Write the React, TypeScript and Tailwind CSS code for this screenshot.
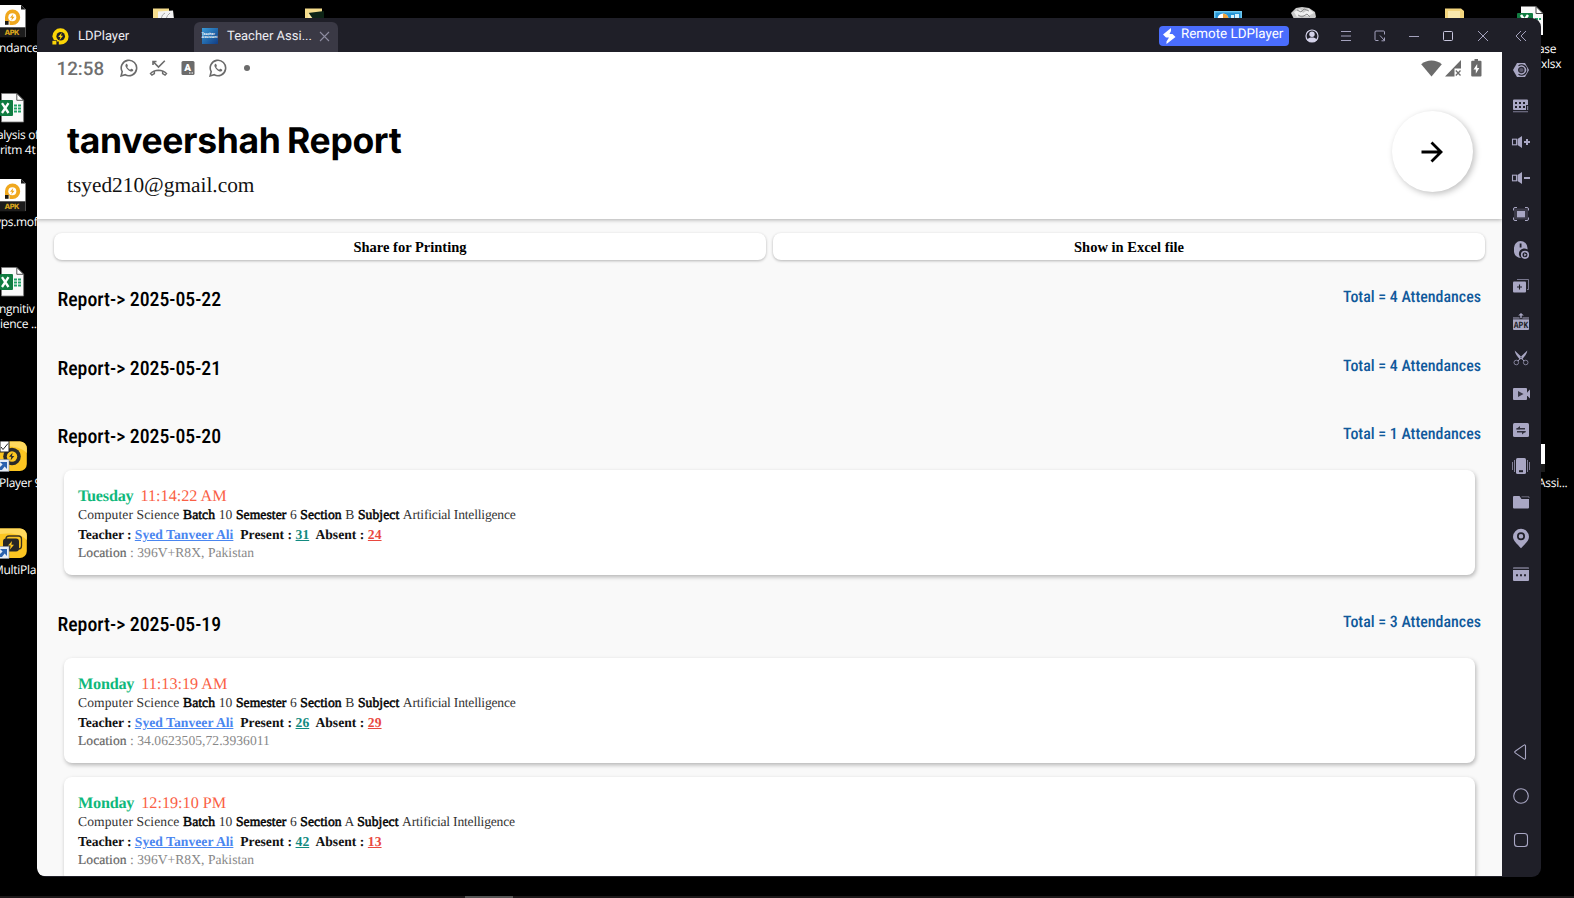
import React from "react";

const LILAC = "#a9a7c4";

function ApkFile() {
  return (
    <svg width="30" height="33" viewBox="0 0 30 33">
      <path d="M0 0H21L25.5 4.5V32H0Z" fill="#fff" />
      <path d="M21 0V4.5H25.5Z" fill="#1c1c1c" />
      <path d="M12.5 4.5a7.7 7.7 0 1 1 0 15.4H9.5V16.5H5V12.2a7.6 7.6 0 0 1 7.5-7.7Z" fill="#f0a81e" />
      <circle cx="12.3" cy="12.2" r="4" fill="#fff" />
      <path d="M13.2 9l-3.2 3.8h2l-.8 3 3.4-4h-2z" fill="#f0a81e" />
      <rect x="5" y="16" width="3.6" height="3.8" fill="#1f1b14" />
      <rect y="22.3" width="25.5" height="10" fill="#1c1c1c" />
      <text x="4.5" y="30.3" fontFamily="Inter, sans-serif" fontWeight="800" fontSize="7.4" textLength="15" fill="#d9a51c">APK</text>
    </svg>
  );
}

function ExcelFile() {
  return (
    <svg width="26" height="30" viewBox="0 0 26 30">
      <path d="M1.5.5H16.8L23.6 7.3V29H1.5Z" fill="#fafafa" stroke="#777" strokeWidth=".8" />
      <path d="M16.8.5V7.3H23.6Z" fill="#fff" stroke="#444" strokeWidth=".9" />
      <path d="M14 11.5h3v2h-3zM18 11.5h3v2h-3zM14 14.5h3v2h-3zM18 14.5h3v2h-3zM14 17.5h3v2h-3zM18 17.5h3v2h-3z" fill="#21a366" />
      <rect x="0" y="7" width="13" height="16" rx="1" fill="#107c41" />
      <path d="M2 10.2L8.5 20M8.5 10.2L2 20" stroke="#fff" strokeWidth="2.3" />
    </svg>
  );
}

function LdShortcut({ multi }: { multi?: boolean }) {
  return (
    <svg width="28" height="31" viewBox="0 0 28 31">
      <rect x="-10" y="0.5" width="36.8" height="29.5" rx="7" fill="#fcc521" />
      <path d="M0 .5h20a7 7 0 0 1 6.8 7V12C20 5 8 5 0 6Z" fill="#ffd95e" />
      {multi ? (
        <>
          <rect x="6" y="8" width="15.5" height="13" rx="3" fill="none" stroke="#3a3020" strokeWidth="1.3" />
          <rect x="3" y="10.5" width="16" height="13" rx="3" fill="#262626" />
          <path d="M12 13l-4 4.5h2.6L10 21.5l4-4.8h-2.6z" fill="#fcc521" />
        </>
      ) : (
        <>
          <circle cx="12" cy="15.5" r="8.8" fill="#292929" />
          <circle cx="12" cy="15.5" r="5.2" fill="#fcc521" />
          <path d="M12.6 11.4l-3.6 4.4h2.3l-.7 3.6 3.7-4.4H12z" fill="#292929" />
          <path d="M0 0H9V11H0Z" fill="#fff" stroke="#222" />
          <path d="M1 6l2 2.5L8 2.5" fill="none" stroke="#222" />
        </>
      )}
      <rect x="-1" y="18.5" width="10" height="12" fill="#e8eef6" stroke="#8a9099" strokeWidth=".6" />
      <path d="M0 21h7v7l-2.4-2.4L2 29H0v-3l2.6-2.6z" fill="#2b62ae" />
    </svg>
  );
}

function LdLogo() {
  return (
    <svg width="17" height="17" viewBox="0 0 17 17">
      <path d="M8.5.3a8.1 8.1 0 0 1 0 16.2H6.8V13.6H4.2A8 8 0 0 1 .3 8.4 8.1 8.1 0 0 1 8.500.3Z" fill="#fbd506" />
      <circle cx="8.7" cy="8.3" r="4.3" fill="#1f1f28" />
      <path d="M9.8 4.6L6.2 8.9h2.1l-.8 3.3 3.6-4.4H9z" fill="#fbd506" />
      <path d="M0 12.200H5V17H0z" fill="#1f1f28" />
      <rect x=".4" y="12.800" width="4" height="3.700" fill="#fbd506" />
    </svg>
  );
}

function WhatsApp() {
  return (
    <svg width="18" height="18" viewBox="0 0 18 18" fill="none" stroke="#6b6b6b">
      <path d="M1.1 16.9l1.1-4.2a7.7 7.7 0 1 1 3 3z" strokeWidth="1.6" />
      <path d="M6.2 4.9c-.9.6-1 1.7-.5 2.8 1 2.2 2.600 3.800 4.900 4.700 1.100.4 2.200 0 2.600-.9.1-.4.1-.7-.2-.9l-1.500-.8c-.3-.1-.5 0-.7.2l-.6.8C8.800 10.200 7.700 9.200 7.200 8l.6-.8c.1-.2.1-.4 0-.6L7.100 5.100c-.2-.4-.6-.4-.9-.2z" fill="#6b6b6b" stroke="none" />
    </svg>
  );
}

function MissedCall() {
  return (
    <svg width="19" height="17" viewBox="0 0 19 17" fill="none" stroke="#6b6b6b">
      <path d="M4 5V1.500H7.500M4.300 1.800L9.500 7 15.800.7" strokeWidth="1.600" />
      <path d="M.5 13.500C5.300 8.200 13.700 8.200 18.500 13.500L16.200 16 12.900 13.900V11.600C10.700 11 8.300 11 6.100 11.600V13.900L2.800 16Z" fill="#6b6b6b" stroke="none" />
      <path d="M2.400 13.500L4.600 12.100V13.200L2.900 14.200ZM16.600 13.500L14.400 12.100V13.200L16.100 14.200Z" fill="#fff" stroke="none" />
    </svg>
  );
}

const toolIcons: React.ReactNode[] = [
  <g key="a">
    <path d="M5 2H13L17 9 13 16H5L1 9Z" />
    <path d="M6.500 4.800A5.200 5.200 0 1 1 6.500 13.200" fill="none" stroke="#1f1f28" strokeWidth="1.200" />
    <circle cx="9.300" cy="9" r="2.700" fill="#5b596c" stroke="#2a2935" strokeWidth="1.200" />
  </g>,
  <g key="b">
    <path fillRule="evenodd" d="M2 2.500H15a1 1 0 0 1 1 1V8H14V13H2a1 1 0 0 1-1-1V3.500a1 1 0 0 1 1-1ZM3 5V7H5V5ZM7 5V7H9V5ZM11 5V7H13V5ZM3 9V11H5V9ZM7 9V11H9V9ZM11 9V11H13V9Z" />
    <path d="M15 9h1.200v4H15zM1 14.300H16v.9H1z" opacity=".7" />
  </g>,
  <g key="c">
    <path d="M10 3V15L5.500 12V6Z" />
    <rect x=".5" y="6.200" width="4" height="5.600" fill="none" stroke={LILAC} strokeWidth="1.100" />
    <path d="M12 8.100h6v1.900h-6zM14 6h2v6h-2z" />
  </g>,
  <g key="d">
    <path d="M10 3V15L5.500 12V6Z" />
    <rect x=".5" y="6.200" width="4" height="5.600" fill="none" stroke={LILAC} strokeWidth="1.100" />
    <path d="M12 8.100h6v1.800h-6z" />
  </g>,
  <g key="e">
    <rect x="2" y="3.500" width="14" height="11" fill="#3c3b49" />
    <rect x="5" y="6" width="8" height="6.300" />
    <path d="M1.500 5.500V4a1.500 1.500 0 0 1 1.500-1.500H5M13 2.500h2A1.500 1.500 0 0 1 16.500 4V5.500M16.500 12.500V14a1.500 1.500 0 0 1-1.500 1.500H13M5 15.500H3A1.500 1.500 0 0 1 1.500 14V12.500" fill="none" stroke={LILAC} />
  </g>,
  <g key="f">
    <path d="M8.500 0A7 7 0 0 1 15.500 7V8.500A5 5 0 0 0 9 17 6.800 6.800 0 0 1 2 11V7A6.800 6.800 0 0 1 8.500 0Z" />
    <rect x="7.700" y="2.500" width="1.800" height="4" fill="#1f1f28" />
    <circle cx="13" cy="13.800" r="3.300" fill="none" stroke={LILAC} strokeWidth="1.600" />
    <path d="M12.200 12.200l2.500 1.600-2.500 1.600z" />
  </g>,
  <g key="g">
    <path d="M5 2.500H16.500V12.500H15" fill="none" stroke={LILAC} opacity=".65" />
    <rect x="1" y="4.500" width="13" height="11" rx="1" />
    <path d="M7.500 7.500v5M5 10h5" stroke="#1f1f28" strokeWidth="1.100" />
  </g>,
  <g key="h">
    <path d="M8.300 5V2.500H6.200L9 0l2.800 2.500H9.700V5z" />
    <path d="M1 4.500H7.500V5.700H10.500V4.500H17V16a1 1 0 0 1-1 1H2a1 1 0 0 1-1-1Z" />
    <path d="M1 5.900H17" stroke="#1f1f28" strokeWidth=".9" />
    <text x="1.800" y="15" fontSize="9.500" textLength="14.400" lengthAdjust="spacingAndGlyphs" fontWeight="700" fontFamily="Liberation Mono, monospace" fill="#1f1f28">APK</text>
  </g>,
  <g key="i">
    <path d="M2.700 1.500C3 4.500 5.200 7.500 8 10.500L10 8.500ZM15.300 1.500C15 4.500 12.800 7.500 10 10.500L8 8.500Z" />
    <path d="M9 8.500L6 12M9 8.500L12 12" stroke={LILAC} />
    <circle cx="4.300" cy="13.500" r="2.300" fill="none" stroke={LILAC} opacity=".7" />
    <circle cx="13.700" cy="13.500" r="2.300" fill="none" stroke={LILAC} opacity=".7" />
  </g>,
  <g key="j">
    <rect x="1" y="3" width="14" height="12" rx="1" />
    <path d="M15 7.500L18 4.500V13.500L15 10.500Z" />
    <path d="M6 6l5.500 3L6 12z" fill="#3a3947" />
  </g>,
  <g key="k">
    <rect x="1" y="2" width="16" height="14" rx="1.500" />
    <path d="M4.500 7.800H13M13.500 10.800H5" stroke="#33323f" strokeWidth="1.500" />
    <path d="M4 8.300L8 5V8.300ZM14 10.300L10 13.600V10.300Z" fill="#33323f" />
  </g>,
  <g key="l">
    <rect x="4" y="1" width="10" height="16" rx="1.500" />
    <path d="M7 13.200h4v2H7z" fill="#1f1f28" />
    <path d="M2.500 3V15M15.500 3V15" stroke={LILAC} opacity=".7" />
    <path d="M.5 5V13M17.500 5V13" stroke={LILAC} opacity=".7" />
  </g>,
  <g key="m">
    <path d="M1 4a1 1 0 0 1 1-1H7.500L9.500 6H17V14.500a1 1 0 0 1-1 1H2a1 1 0 0 1-1-1Z" />
    <path d="M9.500 3.800H17V5" fill="none" stroke={LILAC} opacity=".55" />
  </g>,
  <path key="n" transform="translate(0 .8)" fillRule="evenodd" d="M9-1A8 8 0 0 1 17 7C17 11 13 14 9 18.500 5 14 1 11 1 7A8 8 0 0 1 9-1ZM9 2.500A4 4 0 1 0 9 10.500 4 4 0 1 0 9 2.500ZM9 4.200A2.300 2.300 0 1 1 9 8.800 2.300 2.300 0 1 1 9 4.200Z" />,
  <g key="o">
    <path d="M2 2H16a1 1 0 0 1 1 1v1H1V3a1 1 0 0 1 1-1Z" opacity=".5" />
    <path d="M1 5H17V15a1 1 0 0 1-1 1H2a1 1 0 0 1-1-1Z" />
    <path d="M4 9.200h2v2H4zM8 9.200h2v2H8zM12 9.200h2v2h-2z" fill="#2a2935" />
  </g>,
];

const navIcons: React.ReactNode[] = [
  <path key="back" d="M13.500 2.800V15.200a1 1 0 0 1-1.600.7L3.200 9.900a1 1 0 0 1 0-1.700L11.900 2.100a1 1 0 0 1 1.600.7Z" />,
  <circle key="home" cx="9" cy="9" r="7.300" />,
  <rect key="recent" x="2.500" y="2.500" width="13" height="13" rx="3" />,
];

type Entry = { day: string; time: string; section: string; present: number; absent: number; location: string };

function Strong({ children }: { children: string }) {
  return <span className="text-black [-webkit-text-stroke:0.500px_#000]">{children}</span>;
}

function EntryCard({ e }: { e: Entry }) {
  return (
    <div className="h-[105px] shrink-0 whitespace-pre rounded-[8px] bg-white pl-[14px] pt-[16px] font-['Liberation_Serif',serif] text-[13.600px] text-[#333] shadow-[1px_2px_4px_rgba(0,0,0,0.28)]">
      <div className="h-[19px] text-[16.200px] leading-[20px]">
        <b className="tracking-[-0.220px] text-[#0fb87b]">{e.day}</b>
        <span className="ml-[7px] text-[#fa6045]">{e.time}</span>
      </div>
      <div className="h-[20px] leading-[20px] tracking-[0.090px]">
        Computer Science <Strong>Batch</Strong> 10 <Strong>Semester</Strong> 6 <Strong>Section</Strong> {e.section} <Strong>Subject</Strong> <span className="tracking-[-0.200px]">Artificial Intelligence</span>
      </div>
      <div className="h-[19px] font-bold leading-[19px] tracking-[0.040px] text-[#111]">
        <span className="tracking-[-0.060px]">Teacher : </span><span className="text-[#4a86f0] underline">Syed Tanveer Ali</span>
        {"  "}Present : <span className="text-[#128a80] underline">{e.present}</span>
        {"  "}Absent : <span className="text-[#e9483f] underline">{e.absent}</span>
      </div>
      <div className="h-[18px] leading-[18px] tracking-[0.030px] text-[#888]">
        <span className="text-[#666] [-webkit-text-stroke:0.200px_#666]">Location</span> : {e.location}
      </div>
    </div>
  );
}

function DayHeading({ date, total }: { date: string; total: number }) {
  return (
    <div className="flex h-[24px] justify-between whitespace-pre pl-[20.500px] pr-[21px] font-[Roboto,sans-serif] font-medium [font-stretch:75%]">
      <div className="text-[19.800px] leading-[24px] text-black">{`Report-> ${date}`}</div>
      <div className="-mt-[3px] text-[15.950px] leading-[24px] text-[#115a9c]">{`Total = ${total} Attendances`}</div>
    </div>
  );
}

const entries: Entry[] = [
  { day: "Tuesday", time: "11:14:22 AM", section: "B", present: 31, absent: 24, location: "396V+R8X, Pakistan" },
  { day: "Monday", time: "11:13:19 AM", section: "B", present: 26, absent: 29, location: "34.0623505,72.3936011" },
  { day: "Monday", time: "12:19:10 PM", section: "A", present: 42, absent: 13, location: "396V+R8X, Pakistan" },
];

function Desktop() {
  const label = "absolute whitespace-pre font-['Open_Sans','Noto_Sans',sans-serif] text-[12px] leading-[15px] tracking-[-0.300px] text-white";
  return (
    <div className="absolute inset-0 overflow-hidden bg-black">
      <div className="absolute left-0 top-[5px]"><ApkFile /></div>
      <div className={`${label} -left-[1px] top-[40px]`}>ndance</div>
      <div className="absolute left-0 top-[93px]"><ExcelFile /></div>
      <div className={`${label} -left-[3px] top-[127px]`}>alysis of</div>
      <div className={`${label} -left-[7px] top-[142px]`}>oritm 4t</div>
      <div className="absolute left-0 top-[179px]"><ApkFile /></div>
      <div className={`${label} -left-[5px] top-[214px]`}>yps.mof</div>
      <div className="absolute left-0 top-[267px]"><ExcelFile /></div>
      <div className={`${label} -left-[1px] top-[301px]`}>ngnitiv</div>
      <div className={`${label} left-0 top-[316px]`}>ience ..</div>
      <div className="absolute left-0 top-[441px]"><LdShortcut /></div>
      <div className={`${label} -left-[1px] top-[475px]`}>Player 9</div>
      <div className="absolute left-0 top-[528px]"><LdShortcut multi /></div>
      <div className={`${label} -left-[7px] top-[562px]`}>MultiPla</div>
      <svg className="absolute left-[153px] top-[7px]" width="22" height="12" viewBox="0 0 22 12">
        <path d="M0 1.500H16V12H0Z" fill="#f5dc8c" /><path d="M5 4.500L20 3.500 21 12H5Z" fill="#f2f2f2" /><path d="M8 12q1-5 4-6M13 12q1-4 4-6" stroke="#aaa" fill="none" />
      </svg>
      <svg className="absolute left-[305px] top-[7px]" width="22" height="12" viewBox="0 0 22 12">
        <path d="M0 1.500H17V12H0Z" fill="#f5dc8c" /><path d="M3 6L19 4V12H5Z" fill="#0d2416" /><path d="M3 5l5 7H3z" fill="#fbe9a6" />
      </svg>
      <svg className="absolute left-[1214px] top-[11px]" width="28" height="8" viewBox="0 0 28 8">
        <rect width="28" height="8" fill="#6cc7f0" /><rect x="1.500" y="1.500" width="25" height="7" fill="#2595d6" /><circle cx="9" cy="8" r="5.500" fill="#fff" /><path d="M9 2.500V8h5.500A5.500 5.500 0 0 0 9 2.500" fill="#f0a23a" /><path d="M17 4h3v4h-3zM21 3h4v5h-4z" fill="#d6f0fc" />
      </svg>
      <svg className="absolute left-[1290px] top-[6px]" width="28" height="13" viewBox="0 0 28 13">
        <path d="M1 7L6 2l6-1 7 1 6 4 1 5-2 2H4z" fill="#c9c9c9" /><path d="M4 6l6-3 3 4 6-4 5 4-6 3-6-1-5 2z" fill="#efefef" /><path d="M8 9l4 2 5-3 3 3M7 4l4 2 3-3 5 2" stroke="#8c8c8c" fill="none" />
      </svg>
      <svg className="absolute left-[1445px] top-[7px]" width="20" height="12" viewBox="0 0 20 12">
        <path d="M0 1.500H16L19 4V12H0Z" fill="#f3d57e" /><path d="M3 4H15V12H3Z" fill="#fae9ae" />
      </svg>
      <div className="absolute left-[1517px] top-[6px]">
        <svg width="28" height="30" viewBox="0 0 28 30">
          <path d="M4 .5H19L26 7.500V29H4Z" fill="#fafafa" /><path d="M19 .5V7.500H26Z" fill="#fff" stroke="#444" /><rect y="7" width="16" height="16" rx="1" fill="#107c41" /><path d="M4 9l7 10M11 9L4 19" stroke="#fff" strokeWidth="2.500" /><path d="M18 12h3v2h-3zM22 12h2v2h-2z" fill="#21a366" />
        </svg>
      </div>
      <div className={`${label} left-[1538px] top-[41px]`}>ase</div>
      <div className={`${label} left-[1541px] top-[56px]`}>xlsx</div>
      <div className="absolute left-[1540px] top-[444px] h-[20px] w-[5px] bg-white" />
      <div className="absolute left-[1540px] top-[464px] h-[8px] w-[5px] bg-[#1c1c1c]" />
      <div className={`${label} left-[1538px] top-[475px]`}>Assi...</div>
      <div className="absolute bottom-0 left-0 h-[2px] w-full bg-[#1d191a]" />
      <div className="absolute bottom-0 left-[465px] h-[2px] w-[48px] bg-[#555]" />
    </div>
  );
}

function TitleBar() {
  return (
    <div className="flex h-[34px] shrink-0 items-center font-[Roboto,sans-serif] text-[#ececf2]">
      <div className="ml-[15px] flex w-[141.500px] items-center pt-[2px] text-[13px]">
        <LdLogo />
        <span className="ml-[9px] pt-[2px]">LDPlayer</span>
      </div>
      <div className="flex h-[30px] w-[144px] items-center self-end rounded-t-[6px] bg-[#3a3945] pb-[2px] pl-[8px] text-[13px]">
        <div className="flex h-4 w-4 items-center justify-center bg-linear-to-br from-[#3a9bd8] to-[#133d85] font-['Liberation_Sans',sans-serif] text-[3.500px] font-bold leading-[3.500px] text-white">Teacher<br />Assistant</div>
        <span className="ml-[9.500px] w-[88px] whitespace-pre pt-[2px]">Teacher Assi...</span>
        <svg className="ml-[4px]" width="11" height="11" viewBox="0 0 11 11"><path d="M1 1l9 9M10 1l-9 9" stroke="#8d8ca0" strokeWidth="1.100" /></svg>
      </div>
      <div className="ml-auto flex items-center pt-px">
        <div className="flex h-5 w-[130px] items-center rounded-[4px] bg-[#4a6dfd] pl-[4px] text-[13.400px] text-white">
          <svg width="13" height="16" viewBox="0 0 13 16"><path d="M8 0L0 6.500 3 9.500H6L3.500 13.500V16L12.500 9 9.500 6H6.500L8 3Z" fill="#fff" /></svg>
          <span className="ml-[5px] whitespace-pre">Remote LDPlayer</span>
        </div>
        <svg className="ml-[16px]" width="14" height="14" viewBox="0 0 14 14"><circle cx="7" cy="7" r="6" fill="none" stroke="#d4d2ea" strokeWidth="1.200" /><circle cx="7" cy="5.300" r="2.700" fill="#d4d2ea" /><path d="M2.200 11.200C3 8.900 5 8.600 7 8.600s4 .3 4.800 2.600A6 6 0 0 1 7 13a6 6 0 0 1-4.800-1.800Z" fill="#d4d2ea" /></svg>
        <svg className="ml-[21px]" width="12" height="12" viewBox="0 0 12 12"><path d="M1 1.500H11M1 6H11M1 10.500H11" stroke="#a4a2bd" strokeWidth="1" /></svg>
        <svg className="ml-[22px]" width="12" height="12" viewBox="0 0 12 12"><path d="M4.500 10.500H2A1 1 0 0 1 1 9.500V2A1 1 0 0 1 2 1H9.500A1 1 0 0 1 10.500 2V4.500M6 5.500L10.500 10.500M10.500 7.500V10.800H7.500" fill="none" stroke="#a4a2bd" strokeWidth="1" /></svg>
        <svg className="ml-[22px]" width="12" height="12" viewBox="0 0 12 12"><path d="M1 6.500H11" stroke="#a4a2bd" /></svg>
        <svg className="ml-[22px]" width="12" height="12" viewBox="0 0 12 12"><rect x="1.500" y="1.500" width="9" height="9" rx="1" fill="none" stroke="#c8c6de" /></svg>
        <svg className="mr-[13px] ml-[23px]" width="12" height="12" viewBox="0 0 12 12"><path d="M1 1l10 10M11 1L1 11" stroke="#a4a2bd" /></svg>
      </div>
    </div>
  );
}

function StatusBar() {
  return (
    <div className="flex h-[32px] items-center pl-[19.500px] font-[Roboto,sans-serif]">
      <span className="w-[50px] pt-[3px] text-[18.800px] font-medium leading-none text-[#6f6f6f]">12:58</span>
      <span className="ml-[13px]"><WhatsApp /></span>
      <span className="ml-[11px]"><MissedCall /></span>
      <svg className="ml-[13px]" width="14" height="16" viewBox="0 0 14 16"><rect x=".5" y="1" width="13" height="14" rx="1.500" fill="#6b6b6b" /><text x="3.300" y="11.300" fontFamily="Roboto, sans-serif" fontWeight="900" fontSize="10" fill="#fff">A</text><path d="M8 12.500h1.500v1H8zM10.500 12.500h1.500v1h-1.500z" fill="#fff" /></svg>
      <span className="ml-[14px]"><WhatsApp /></span>
      <span className="ml-[17px] h-[6px] w-[6px] rounded-full bg-[#6b6b6b]" />
      <svg className="ml-auto" width="21" height="17" viewBox="0 0 21 17"><path d="M.2 4.200C6-.7 15-.7 20.800 4.200L10.500 16.500Z" fill="#6b6b6b" /></svg>
      <svg className="ml-[3px]" width="17" height="17" viewBox="0 0 17 17"><path d="M16 0V8.500H9.500V16.500H0Z" fill="#6b6b6b" /><path d="M10.800 10.500l4.700 5M15.500 10.500l-4.700 5" stroke="#6b6b6b" strokeWidth="1.300" /></svg>
      <svg className="mr-[20px] ml-[9px]" width="11" height="18" viewBox="0 0 11 18"><path d="M3.500 0h3.500v1.800h2.500a1 1 0 0 1 1 1V16.500a1 1 0 0 1-1 1H1.200a1 1 0 0 1-1-1V2.800a1 1 0 0 1 1-1h2.300z" fill="#6b6b6b" /><path d="M6.200 5L2.500 10.500h2.300v4.300L8.300 9H6.200z" fill="#fff" /></svg>
    </div>
  );
}

export default function App() {
  const action = "flex h-[27px] flex-1 items-center justify-center rounded-[8px] bg-white pt-[2px] shadow-[0_1px_3px_rgba(0,0,0,0.28)]";
  return (
    <div className="relative h-[898px] w-[1574px] overflow-hidden [text-rendering:geometricPrecision]">
      <Desktop />
      <div className="absolute left-[37px] top-[18px] flex h-[859px] w-[1504px] overflow-hidden rounded-[9px] bg-[#1f1f28] pb-px">
        <div className="flex w-[1465px] flex-col">
          <TitleBar />
          <div className="flex min-h-0 flex-1 flex-col overflow-hidden rounded-bl-[7px] bg-[#f9f9f9]">
            <div className="relative h-[167px] shrink-0 bg-white shadow-[0_1px_4px_rgba(0,0,0,0.3)]">
              <StatusBar />
              <div className="flex justify-between pl-[30px] pr-[29.500px]">
                <div className="whitespace-pre">
                  <h1 className="mt-[35px] font-[Inter,sans-serif] text-[35.500px] font-bold leading-[44px] tracking-[-0.350px] text-black [word-spacing:-1.500px]">tanveershah Report</h1>
                  <p className="mt-[9px] font-['Liberation_Serif',serif] text-[21.350px] leading-[26px] text-[#111]">tsyed210@gmail.com</p>
                </div>
                <button className="mt-[27px] flex h-[81px] w-[81px] items-center justify-center rounded-full bg-white shadow-[2px_2px_6px_rgba(0,0,0,0.25)]">
                  <svg width="22" height="22" viewBox="0 0 22 22" fill="none" stroke="#000" strokeWidth="2.800"><path d="M.5 11H19.500M10.500 1.500L20 11 10.500 20.500" /></svg>
                </button>
              </div>
            </div>
            <div className="mt-[14px] flex shrink-0 gap-[7px] px-[17px] font-['Liberation_Serif',serif] text-[14.500px] font-bold text-black">
              <button className={action}>Share for Printing</button>
              <button className={action}>Show in Excel file</button>
            </div>
            <div className="mt-[28px] shrink-0"><DayHeading date="2025-05-22" total={4} /></div>
            <div className="mt-[45px] shrink-0"><DayHeading date="2025-05-21" total={4} /></div>
            <div className="mt-[44px] shrink-0"><DayHeading date="2025-05-20" total={1} /></div>
            <div className="mt-[21px] shrink-0 pl-[27px] pr-[27px]"><EntryCard e={entries[0]} /></div>
            <div className="mt-[38px] shrink-0"><DayHeading date="2025-05-19" total={3} /></div>
            <div className="mt-[21px] flex shrink-0 flex-col gap-[14px] pl-[27px] pr-[27px]">
              <EntryCard e={entries[1]} />
              <EntryCard e={entries[2]} />
            </div>
          </div>
        </div>
        <div className="flex w-[39px] flex-col items-center pr-[1px]">
          <div className="flex h-[34px] items-center pt-px"><svg width="12" height="12" viewBox="0 0 12 12" fill="none" stroke="#a4a2bd"><path d="M6 1L1 6l5 5M11 1L6 6l5 5" /></svg></div>
          {toolIcons.map((icon, i) => (
            <div key={i} className="flex h-[36px] items-center"><svg width="18" height="18" viewBox="0 0 18 18" fill={LILAC} className="overflow-visible">{icon}</svg></div>
          ))}
          <div className="mt-auto mb-[14px] flex flex-col">
            {navIcons.map((icon, i) => (
              <div key={i} className="flex h-[44px] items-center"><svg width="18" height="18" viewBox="0 0 18 18" fill="none" stroke={LILAC} strokeWidth="1.100">{icon}</svg></div>
            ))}
          </div>
        </div>
      </div>
    </div>
  );
}
